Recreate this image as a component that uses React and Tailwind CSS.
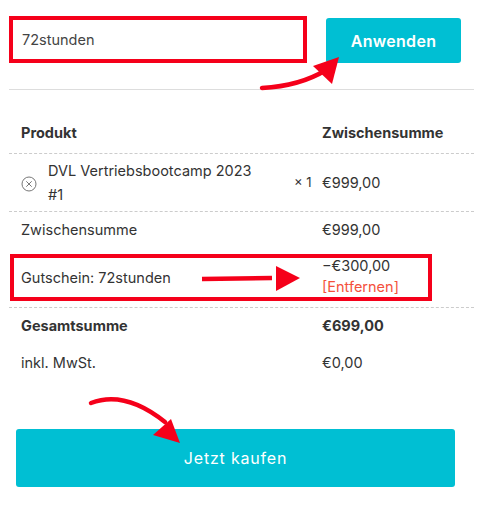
export default function App() {
  return (
    <div className="relative w-[483px] h-[525px] bg-white text-[#333] font-['Inter',sans-serif] text-[14.5px]">
      <div className="px-[9px] pt-[16px]">
        <div className="flex items-center">
          <div className="w-[298px] h-[47px] border-[4px] border-[#f5001a] flex items-center pl-[9px] text-[#444] text-[14.5px]">
            72stunden
          </div>
          <button className="ml-[19px] mt-[2px] w-[135px] h-[45px] bg-[#00bfd3] rounded-[3px] text-white font-semibold text-[16px] tracking-[0.3px]">
            Anwenden
          </button>
        </div>

        <div className="mt-[26px] border-t border-[#dddddd]" />

        <div className="h-[63px] flex items-end pb-[9px] font-bold">
          <div className="w-[313px] pl-[12px]">Produkt</div>
          <div>Zwischensumme</div>
        </div>
        <div className="border-t border-dashed border-[#cccccc]" />

        <div className="h-[57px] flex items-center">
          <div className="w-[39px] pl-[12px] pt-[3px]">
            <svg width="16" height="16" viewBox="0 0 16 16" fill="none" stroke="#777" strokeWidth="1">
              <circle cx="8" cy="8" r="7" />
              <path d="M5.3 5.3l5.4 5.4M10.7 5.3l-5.4 5.4" />
            </svg>
          </div>
          <div className="w-[246px] leading-[24px]">
            DVL Vertriebsbootcamp 2023
            <br />
            #1
          </div>
          <div className="w-[28px] text-[13px]">× 1</div>
          <div>€999,00</div>
        </div>
        <div className="border-t border-dashed border-[#cccccc]" />

        <div className="h-[36px] flex items-center">
          <div className="w-[313px] pl-[12px]">Zwischensumme</div>
          <div>€999,00</div>
        </div>

        <div className="relative h-[59px] flex items-center">
          <div className="absolute left-[1px] top-[6px] w-[422px] h-[47px] border-[4px] border-[#f5001a]" />
          <div className="w-[313px] pl-[12px]">Gutschein: 72stunden</div>
          <div className="leading-[21px] -mt-[4px]">
            <div>−€300,00</div>
            <div className="text-[#f4503c]">[Entfernen]</div>
          </div>
        </div>
        <div className="border-t border-dashed border-[#cccccc]" />

        <div className="h-[36px] flex items-center font-bold">
          <div className="w-[313px] pl-[12px]">Gesamtsumme</div>
          <div>€699,00</div>
        </div>
        <div className="h-[38px] flex items-center">
          <div className="w-[313px] pl-[12px]">inkl. MwSt.</div>
          <div>€0,00</div>
        </div>

        <button className="mt-[47px] ml-[7px] w-[439px] h-[58px] bg-[#00bfd3] rounded-[3px] text-white text-[16px] tracking-[0.8px]">
          Jetzt kaufen
        </button>
      </div>

      <svg className="absolute left-0 top-0 pointer-events-none" width="483" height="525">
        <path d="M262 88 Q300 86 326 70" stroke="#f5001a" strokeWidth="4.5" fill="none" strokeLinecap="round" />
        <polygon points="339,57 313,66 332,84" fill="#f5001a" />
        <path d="M202 279 L272 278" stroke="#f5001a" strokeWidth="4.5" fill="none" />
        <polygon points="300,278 276,266 276,291" fill="#f5001a" />
        <path d="M91 403 Q125 390 165 422" stroke="#f5001a" strokeWidth="4.5" fill="none" strokeLinecap="round" />
        <polygon points="180,443 153,435 171,419" fill="#f5001a" />
      </svg>
    </div>
  );
}
